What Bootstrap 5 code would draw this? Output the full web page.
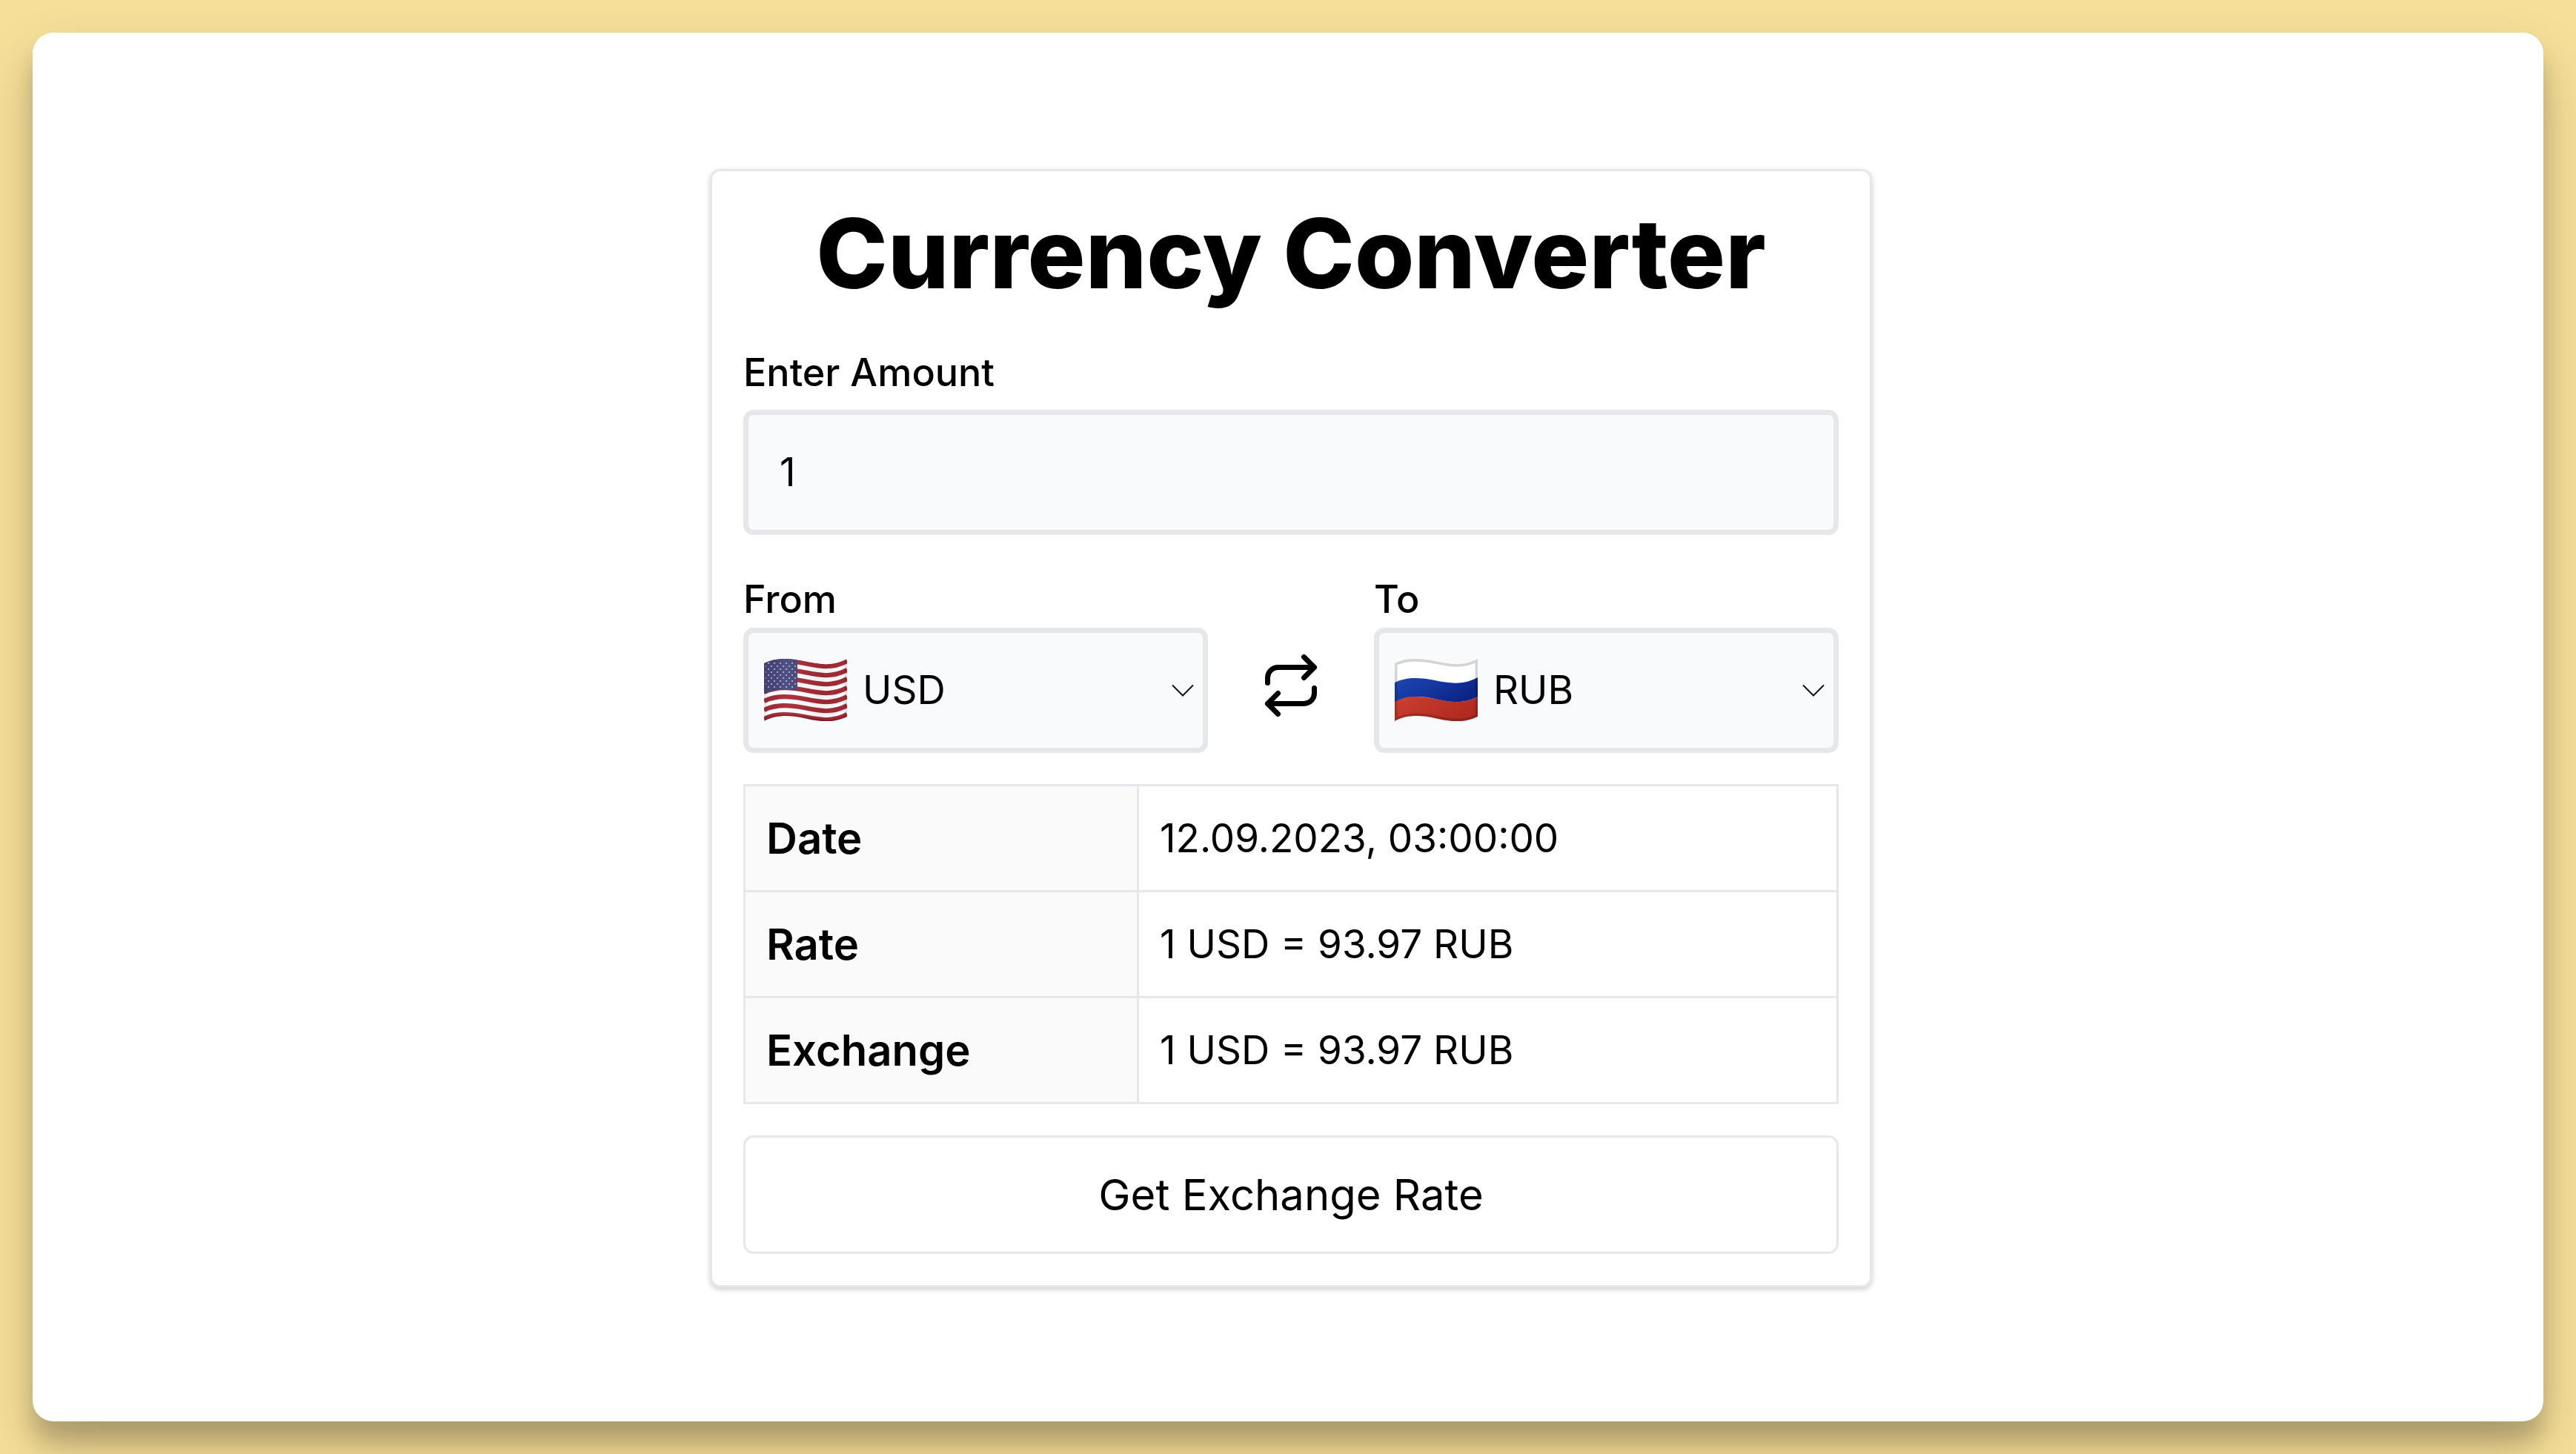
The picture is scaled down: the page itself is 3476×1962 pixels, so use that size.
<!DOCTYPE html>
<html lang="en">
<head>
<meta charset="utf-8">
<meta name="viewport" content="width=device-width, initial-scale=1">
<title>Currency Converter</title>
<link href="https://cdn.jsdelivr.net/npm/bootstrap@5.3.0/dist/css/bootstrap.min.css" rel="stylesheet">
<style>
  :root { --line: #e5e7eb; --field: #f9fafb; --gap: 42px; }
  body {
    background: #f6df98;
    color: #000;
    font-family: Inter, "Open Sans", sans-serif;
    font-size: 53px;
    line-height: 80px;
  }
  .page { min-height: 100vh; padding: 44px; }
  .panel {
    background: #fff;
    border-radius: 28px;
    box-shadow: 0 38px 77px rgba(0, 0, 0, .19), 0 27px 27px rgba(0, 0, 0, .16);
    padding: 3px 0 0 8px;
  }
  .converter {
    width: 100%;
    max-width: 1568px;
    padding: var(--gap);
    border: 3px solid var(--line);
    border-radius: 14px;
    box-shadow: 0 3px 8px rgba(0, 0, 0, .1), 0 3px 6px rgba(0, 0, 0, .1);
  }
  .headline { font-size: 130px; line-height: 138px; font-weight: 800; margin-bottom: 58px; }
  .field-label { font-size: 52px; line-height: 68px; font-weight: 500; }
  .field {
    color: #000;
    background-color: var(--field);
    border: 7px solid var(--line);
    border-radius: 14px;
    font-size: 53px;
    line-height: 81px;
    padding: 37px 42px;
  }
  select.field {
    padding: 37px 62px 37px 154px;
    background-image: url("data:image/svg+xml,%3Csvg xmlns='http://www.w3.org/2000/svg' viewBox='0 0 32 18'%3E%3Cpath d='M2 1.5l14 14 14-14' fill='none' stroke='%23111' stroke-width='2'/%3E%3C/svg%3E");
    background-size: 32px 18px;
    background-position: right 11px center;
  }
  .flag { position: absolute; left: 28px; top: 42px; width: 112px; height: 84px; pointer-events: none; }
  .pair { margin-top: 53px; }
  .currency { flex: 1 1 0; min-width: 0; }
  .swap { width: 224px; height: 169px; border: 0; background: none; }
  .swap svg { width: 84px; height: 84px; margin-top: -22px; }
  .rates { margin: var(--gap) 0; border-collapse: collapse; table-layout: fixed; border-color: var(--line); }
  .rates th, .rates td { border: 3px solid var(--line); padding: 30px 28px; }
  .rates th { width: 36%; background: #fafafa; font-size: 58px; font-weight: 600; }
  .submit {
    border: 3px solid var(--line);
    border-radius: 14px;
    font-size: 58px;
    line-height: 80px;
    padding: 37px;
    color: #000;
    background: #fff;
  }
</style>
</head>
<body>
<div class="page d-flex">
  <main class="panel flex-fill d-flex align-items-center justify-content-center">
    <form class="converter">
      <h1 class="headline text-center">Currency Converter</h1>
      <label class="field-label d-block mb-3" for="amount">Enter Amount</label>
      <input class="form-control field" id="amount" type="text" inputmode="decimal" value="1">

      <div class="pair d-flex align-items-end">
        <div class="currency">
          <label class="field-label d-block" for="from">From</label>
          <div class="position-relative mt-1">
            <select class="form-select field" id="from"><option>USD</option><option>RUB</option></select>
            <svg class="flag" viewBox="0 0 112 84" aria-hidden="true">
              <defs>
                <clipPath id="cloth"><path d="M0 6C16-2 34-1 54 3S92 11 112 0V78C92 88 72 84 54 80S16 75 0 84Z"/></clipPath>
                <clipPath id="canton"><path d="M0 0H45V43C28 40 14 41 0 47Z"/></clipPath>
                <path id="wave" d="M0 9C16 1 34 2 54 6S92 14 112 3" fill="none" stroke="#a52a35" stroke-width="6"/>
                <pattern id="stars" width="8" height="8" patternUnits="userSpaceOnUse">
                  <circle cx="2" cy="2" r="1.1" fill="#b9bbdc"/><circle cx="6" cy="6" r="1.1" fill="#b9bbdc"/>
                </pattern>
                <linearGradient id="shade">
                  <stop offset="0" stop-opacity=".12"/><stop offset=".06" stop-opacity="0"/>
                  <stop offset=".25" stop-color="#fff" stop-opacity=".06"/><stop offset=".7" stop-opacity=".06"/>
                  <stop offset=".95" stop-opacity="0"/><stop offset="1" stop-opacity=".16"/>
                </linearGradient>
              </defs>
              <g clip-path="url(#cloth)">
                <path fill="#fff" d="M0 0H112V84H0Z"/>
                <use href="#wave"/><use href="#wave" y="12"/><use href="#wave" y="24"/><use href="#wave" y="36"/>
                <use href="#wave" y="48"/><use href="#wave" y="60"/><use href="#wave" y="72"/>
                <g clip-path="url(#canton)"><path fill="#454678" d="M0 0H45V50H0Z"/><path fill="url(#stars)" d="M2 3H43V41H2Z"/></g>
                <path fill="url(#shade)" d="M0 0H112V84H0Z"/>
                <path d="M0 84C16 75 34 76 54 80S92 88 112 78" fill="none" stroke="#300" stroke-opacity=".3" stroke-width="4"/>
              </g>
            </svg>
          </div>
        </div>

        <button class="swap p-0" type="button" aria-label="Swap currencies">
          <svg viewBox="0 0 24 24" fill="none" stroke="#000" stroke-width="2" stroke-linecap="round" stroke-linejoin="round">
            <path d="M17 1l4 4-4 4M3 11V9a4 4 0 0 1 4-4h14M7 23l-4-4 4-4M21 13v2a4 4 0 0 1-4 4H3"/>
          </svg>
        </button>

        <div class="currency">
          <label class="field-label d-block" for="to">To</label>
          <div class="position-relative mt-1">
            <select class="form-select field" id="to"><option>RUB</option><option>USD</option></select>
            <svg class="flag" viewBox="0 0 112 84" aria-hidden="true">
              <defs>
                <linearGradient id="blue" x2="1" y2=".5"><stop stop-color="#1c4aae"/><stop offset=".5" stop-color="#1537a0"/><stop offset="1" stop-color="#0c2486"/></linearGradient>
                <linearGradient id="red" x2="1" y2=".5"><stop stop-color="#cc4030"/><stop offset="1" stop-color="#b02a20"/></linearGradient>
              </defs>
              <g clip-path="url(#cloth)">
                <path fill="#fff" d="M0 0H112V84H0Z"/>
                <path fill="url(#red)" d="M0 57C16 49 34 50 54 54S92 62 112 51V84H0Z"/>
                <path fill="url(#blue)" d="M0 32C16 24 34 25 54 29S92 36 112 25V51C92 62 72 58 54 54S16 49 0 58Z"/>
                <path d="M0 6C16-2 34-1 54 3S92 11 112 0V78C92 88 72 84 54 80S16 75 0 84Z" fill="none" stroke="#000" stroke-opacity=".17" stroke-width="7"/>
              </g>
            </svg>
          </div>
        </div>
      </div>

      <table class="rates w-100">
        <tbody>
          <tr><th scope="row">Date</th><td>12.09.2023, 03:00:00</td></tr>
          <tr><th scope="row">Rate</th><td>1 USD = 93.97 RUB</td></tr>
          <tr><th scope="row">Exchange</th><td>1 USD = 93.97 RUB</td></tr>
        </tbody>
      </table>

      <button class="btn submit w-100 d-block" type="submit">Get Exchange Rate</button>
    </form>
  </main>
</div>
<script src="https://cdn.jsdelivr.net/npm/bootstrap@5.3.0/dist/js/bootstrap.bundle.min.js"></script>
</body>
</html>
